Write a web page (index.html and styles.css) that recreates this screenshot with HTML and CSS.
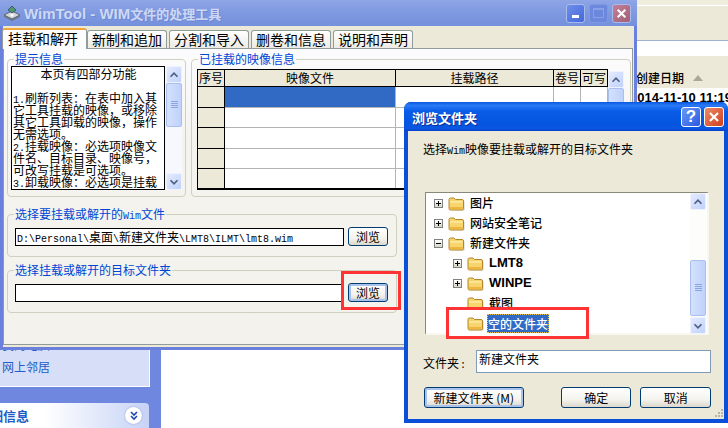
FILE: index.html
```html
<!DOCTYPE html>
<html lang="zh-CN">
<head>
<meta charset="utf-8">
<title>WimTool</title>
<link rel="stylesheet" href="styles.css">
</head>
<body>
<svg class="defs" width="0" height="0" aria-hidden="true">
  <symbol id="folder" viewBox="0 0 17 15">
    <path d="M2 14.5H16.5V5.5H15V14Z" fill="#b5b0a0" opacity=".6"/>
    <path d="M1 3.5Q1 2 2.5 2H6L7.5 3.5H14Q15.5 3.5 15.5 5V12.5Q15.5 14 14 14H2.5Q1 14 1 12.5Z" fill="#f7d56c" stroke="#b4862c"/>
    <path d="M2 5.5H14.5V6.5H2Z" fill="#fff2bf"/>
    <path d="M2 11H14.5V13H2Z" fill="#eeb53f"/>
  </symbol>
  <symbol id="chev-up" viewBox="0 0 16 16"><path d="M4 10L8 6L12 10" fill="none" stroke="#4d6185" stroke-width="2"/></symbol>
  <symbol id="chev-down" viewBox="0 0 16 16"><path d="M4 6L8 10L12 6" fill="none" stroke="#4d6185" stroke-width="2"/></symbol>
  <symbol id="close-x" viewBox="0 0 20 20"><path d="M5.5 5.5L14.5 14.5M14.5 5.5L5.5 14.5" stroke="#fff" stroke-width="2.4"/></symbol>
</svg>

<aside class="sidebar">
  <div class="task-panel">
    <div class="task-link">我的电脑</div>
    <div class="task-link">网上邻居</div>
  </div>
  <div class="task-head">
    <span class="task-title">详细信息</span>
    <span class="task-toggle">
      <svg width="12" height="12" viewBox="0 0 12 12"><path d="M3 2L6 5L9 2M3 6L6 9L9 6" fill="none" stroke="#1c48b0" stroke-width="1.6"/></svg>
    </span>
  </div>
</aside>

<section class="explorer">
  <div class="ex-toolbar"></div>
  <div class="ex-address"></div>
  <div class="ex-header"><span>创建日期</span><i class="sort-arrow"></i></div>
  <div class="ex-row">2014-11-10 11:19</div>
</section>

<main class="win-main">
  <header class="titlebar">
    <svg class="app-icon" width="18" height="17" viewBox="0 0 18 17">
      <path d="M1 10L9 6L17 10L9 14Z" fill="#d4d8de" stroke="#5a6472"/>
      <path d="M1 10V12L9 16L17 12V10L9 14Z" fill="#6d7684"/>
      <path d="M5 5L9 1L13 5L9 8Z" fill="#4f9a6a" stroke="#3c5a72"/>
      <circle cx="9" cy="10" r="1.6" fill="#fff"/>
    </svg>
    <h1 class="title-text"><span class="title-lat">WimTool - WIM</span>文件的处理工具</h1>
    <div class="caption-btns">
      <span class="cap cap-min"><i></i></span>
      <span class="cap cap-max"><i></i></span>
      <span class="cap cap-close"><svg width="19" height="19"><use href="#close-x"/></svg></span>
    </div>
  </header>

  <div class="client">
    <nav class="tabs">
      <span class="tab active">挂载和解开</span>
      <span class="tab">新制和追加</span>
      <span class="tab">分割和导入</span>
      <span class="tab">删卷和信息</span>
      <span class="tab">说明和声明</span>
    </nav>

    <div class="panel">
      <div class="top-groups">
        <fieldset class="group group-tips">
          <legend>提示信息</legend>
          <div class="tips-wrap">
            <div class="tips">
              <div class="center">本页有四部分功能</div>
              <div>&nbsp;</div>
              <div><span class="lat">1.</span>刷新列表：在表中加入其</div>
              <div>它工具挂载的映像，或移除</div>
              <div>其它工具卸载的映像，操作</div>
              <div>无需选项。</div>
              <div><span class="lat">2.</span>挂载映像：必选项映像文</div>
              <div>件名、目标目录、映像号，</div>
              <div>可改写挂载是可选项。</div>
              <div><span class="lat">3.</span>卸载映像：必选项是挂载</div>
            </div>
            <div class="sb sb-tips">
              <span class="sb-btn"><svg width="14" height="14"><use href="#chev-up"/></svg></span>
              <span class="sb-thumb thumb-tips"><i></i></span>
              <span class="sb-fill"></span>
              <span class="sb-btn"><svg width="14" height="14"><use href="#chev-down"/></svg></span>
            </div>
          </div>
        </fieldset>

        <fieldset class="group group-images">
          <legend>已挂载的映像信息</legend>
          <div class="images-wrap">
            <table class="grid">
              <colgroup><col class="c1"><col class="c2"><col class="c3"><col class="c4"><col class="c5"></colgroup>
              <thead><tr><th>序号</th><th>映像文件</th><th>挂载路径</th><th>卷号</th><th>可写</th></tr></thead>
              <tbody>
                <tr><th></th><td class="sel"></td><td></td><td></td><td></td></tr>
                <tr><th></th><td></td><td></td><td></td><td></td></tr>
                <tr><th></th><td></td><td></td><td></td><td></td></tr>
                <tr><th></th><td></td><td></td><td></td><td></td></tr>
                <tr><th></th><td></td><td></td><td></td><td></td></tr>
              </tbody>
            </table>
            <div class="sb sb-grid">
              <span class="sb-btn"><svg width="14" height="14"><use href="#chev-up"/></svg></span>
              <span class="sb-thumb thumb-grid"><i></i></span>
              <span class="sb-fill"></span>
            </div>
          </div>
        </fieldset>
      </div>

      <fieldset class="group group-file">
        <legend>选择要挂载或解开的<span class="lat">Wim</span>文件</legend>
        <div class="file-row">
          <div class="field"><span class="lat">D:\Personal\</span>桌面<span class="lat">\</span>新建文件夹<span class="lat">\LMT8\ILMT\lmt8.wim</span></div>
          <button class="btn btn-browse" type="button">浏览</button>
        </div>
      </fieldset>

      <fieldset class="group group-file group-target">
        <legend>选择挂载或解开的目标文件夹</legend>
        <div class="file-row">
          <div class="field"></div>
          <button class="btn btn-browse btn-default" type="button">浏览</button>
        </div>
      </fieldset>
    </div>
  </div>
  <div class="mark mark-browse"></div>
</main>

<section class="dialog">
  <header class="dlg-title">
    <h2 class="dlg-title-text">浏览文件夹</h2>
    <div class="dlg-caps">
      <span class="dcap dcap-help">?</span>
      <span class="dcap dcap-close"><svg width="20" height="20"><use href="#close-x"/></svg></span>
    </div>
  </header>
  <div class="dlg-body">
    <p class="dlg-prompt">选择<span class="lat">Wim</span>映像要挂载或解开的目标文件夹</p>
    <div class="tree">
      <div class="tree-rows">
        <div class="row"><i class="exp"></i><svg class="fld"><use href="#folder"/></svg><span class="lbl">图片</span></div>
        <div class="row"><i class="exp"></i><svg class="fld"><use href="#folder"/></svg><span class="lbl">网站安全笔记</span></div>
        <div class="row"><i class="exp minus"></i><svg class="fld"><use href="#folder"/></svg><span class="lbl">新建文件夹</span></div>
        <div class="row l2"><i class="exp"></i><svg class="fld"><use href="#folder"/></svg><span class="lbl latin">LMT8</span></div>
        <div class="row l2"><i class="exp"></i><svg class="fld"><use href="#folder"/></svg><span class="lbl latin">WINPE</span></div>
        <div class="row l2"><i class="exp none"></i><svg class="fld"><use href="#folder"/></svg><span class="lbl">截图</span></div>
        <div class="row l2 over"><i class="exp none"></i><svg class="fld"><use href="#folder"/></svg><span class="lbl selected">空的文件夹</span></div>
      </div>
      <div class="sb sb-tree">
        <span class="sb-btn"><svg width="14" height="14"><use href="#chev-up"/></svg></span>
        <span class="sb-fill tree-gap"></span>
        <span class="sb-thumb thumb-tree"><i></i></span>
        <span class="sb-btn"><svg width="14" height="14"><use href="#chev-down"/></svg></span>
      </div>
      <div class="mark mark-tree"></div>
    </div>
    <div class="folder-row">
      <label class="folder-label">文件夹<span class="lat">:</span></label>
      <div class="folder-input">新建文件夹</div>
    </div>
    <div class="dlg-btns">
      <button class="btn btn-new btn-default" type="button">新建文件夹 (M)</button>
      <span class="btn-spring"></span>
      <button class="btn btn-dlg" type="button">确定</button>
      <button class="btn btn-dlg" type="button">取消</button>
    </div>
    <svg class="grip" width="10" height="10" viewBox="0 0 10 10"><path d="M7 0h2v2H7zM4 3h2v2H4zM7 3h2v2H7zM1 6h2v2H1zM4 6h2v2H4zM7 6h2v2H7z" fill="#b8b5a4"/></svg>
  </div>
</section>
</body>
</html>
```

FILE: styles.css
```css
* { box-sizing: border-box; }
html, body { margin: 0; padding: 0; }
body {
  position: relative;
  width: 728px;
  height: 428px;
  overflow: hidden;
  background: #fff;
  font: 12px/14px "Noto Sans CJK SC", sans-serif;
  color: #000;
}
.defs { position: absolute; }
.lat { font-family: "Liberation Mono", "Noto Sans CJK SC", monospace; font-size: 10px; line-height: 0; }
h1, h2, p { margin: 0; }

/* desktop background windows */
.sidebar {
  position: absolute; left: 0; top: 0; width: 161px; height: 428px;
  background: #6f87de;
  display: flex; flex-direction: column; justify-content: flex-end;
}
.task-panel {
  width: 150px; height: 70px;
  background: #d6dff7;
  border-right: 1px solid #fff; border-bottom: 1px solid #fff;
  padding: 21px 0 0 2px;
  margin-bottom: 16px;
  display: flex; flex-direction: column; gap: 8px;
}
.task-link { color: #215dc6; }
.task-head {
  width: 149px; height: 25px;
  background: linear-gradient(90deg, #fff 0, #fff 30%, #c6d3f7 100%);
  border-top-right-radius: 4px;
  display: flex; align-items: center; justify-content: space-between;
  padding-right: 7px;
}
.task-title {
  width: 29px; display: flex; justify-content: flex-end; overflow: hidden; white-space: nowrap;
  font-weight: 700; font-size: 13px; color: #215dc6;
}
.task-toggle {
  width: 17px; height: 17px; border-radius: 50%; background: #fff;
  box-shadow: 0 0 2px #8a9ac8;
  display: flex; align-items: center; justify-content: center;
}
.explorer {
  position: absolute; left: 610px; top: 0; right: 0; height: 428px;
  background: #fff;
  display: flex; flex-direction: column;
}
.ex-toolbar { height: 41px; background: #ece9d8; box-shadow: inset 0 5px 0 #efedde, inset 0 6px 0 #fff; border-bottom: 1px solid #9fb1cf; }
.ex-address { height: 15px; background: #fff; }
.ex-header {
  height: 32px; background: #ece9d8; padding: 11px 0 0 26px;
  display: flex; align-items: center; gap: 9px; font-weight: 500;
}
.sort-arrow { width: 0; height: 0; border: 5px solid transparent; border-top: 0; border-bottom: 6px solid #aca899; }
.ex-row { padding: 2px 0 0 20px; font: 700 13px/16px "Liberation Sans", sans-serif; white-space: nowrap; }

/* main window */
.win-main {
  position: absolute; left: 0; top: 0; width: 637px; height: 350px;
  background: #6b80dd;
  padding: 0 3px 3px;
  display: flex; flex-direction: column;
}
.titlebar {
  height: 26px;
  margin: 0 -3px;
  background: linear-gradient(180deg, #8ea5e6 0, #7f99e0 50%, #7590dc 100%);
  display: flex; align-items: center;
  padding: 0 6px 0 3px;
}
.app-icon { flex: none; }
.title-text {
  font: 700 13px/16px "Noto Sans CJK SC", sans-serif;
  color: #cdd8f3; margin-left: 3px; padding-top: 1px;
  text-shadow: 1px 1px 0 #6f88d6;
  flex: 1;
}
.title-lat { font: 700 15px/16px "Liberation Sans", sans-serif; }
.caption-btns { display: flex; gap: 4px; }
.cap {
  width: 19px; height: 19px; border-radius: 3px;
  border: 1px solid #a9bbec;
  display: flex; align-items: center; justify-content: center; position: relative;
}
.cap-min { background: linear-gradient(135deg, #6e8fe8, #4468dc); }
.cap-min i { width: 7px; height: 3px; background: #fff; margin-top: 7px; }
.cap-max { background: #6b88dc; border-color: #7f9ae2; }
.cap-max i { width: 11px; height: 10px; border: 1px solid #8aa2e4; border-top-width: 2px; }
.cap-close { background: linear-gradient(135deg, #c28097, #a35f78); }

.client {
  flex: 1; background: #ece9d8;
  padding: 1px 1px 2px 0;
  display: flex; flex-direction: column;
}
.tabs { display: flex; align-items: flex-end; gap: 2px; height: 21px; margin-left: -1px; position: relative; z-index: 1; }
.tab {
  width: 80px; height: 18px;
  background: linear-gradient(180deg, #fff, #ecebe4);
  border: 1px solid #919b9c; border-bottom: 0;
  border-radius: 3px 3px 0 0;
  font-size: 14px; line-height: 17px; text-align: center;
}
.tab.active {
  width: 85px; height: 21px; margin-bottom: -1px; margin-right: -2px;
  background: #fcfcfe;
  border-top: 2px solid #f2a63a;
  line-height: 16px;
  padding-right: 3px;
}
.panel {
  flex: 1;
  border: 1px solid #919b9c;
  background: linear-gradient(180deg, #fcfcfe 0, #f4f3ee 30%, #f3f2ec 100%);
  padding: 3px 0 0 3px;
  display: flex; flex-direction: column;
}
.top-groups { display: flex; gap: 5px; }
.group {
  margin: 0; min-width: 0;
  border: 1px solid #d0d0bf; border-radius: 4px;
  padding: 0;
}
.group legend { padding: 0 1px; color: #0046d5; line-height: 14px; }
.group-tips { width: 179px; height: 145px; padding: 0 0 0 3px; }
.group-tips legend { margin-left: 3px; }
.tips-wrap { display: flex; gap: 1px; }
.tips {
  width: 154px; height: 124px;
  background: #fff; border: 1px solid #000;
  padding: 1px 0 0 1px;
  line-height: 12px; overflow: hidden; white-space: nowrap;
}
.center { text-align: center; }
.group-images { width: 440px; height: 145px; padding: 3px 0 0 5px; }
.group-images legend { margin-left: 1px; }
.images-wrap { display: flex; align-items: flex-start; }
.grid {
  width: 410px; height: 121px; table-layout: fixed;
  border-collapse: collapse;
  border: 1px solid #000; border-bottom-width: 2px;
}
.c1, .c4, .c5 { width: 27px; }
.c2 { width: 171px; }
.c3 { width: 158px; }
.grid th {
  background: #ece9d8; border: 1px solid #000; padding: 0;
  font-weight: 400; height: 17px; white-space: nowrap; overflow: hidden;
}
.grid td { background: #fff; border: 1px solid #b4b4b4; padding: 0; }
.grid td.sel { background: #316ac5; }

/* scrollbars */
.sb { width: 16px; display: flex; flex-direction: column; background: #f6f8fe; }
.sb-tips { height: 124px; }
.sb-grid { height: 117px; margin-top: 2px; }
.sb-btn {
  flex: none; height: 17px;
  background: linear-gradient(135deg, #e4ebfe, #c0d2fb);
  border: 1px solid #eef2fd; border-radius: 2px;
  display: flex; align-items: center; justify-content: center;
}
.sb-thumb {
  flex: none;
  background: linear-gradient(90deg, #d4e0fd, #c0d2fb);
  border: 1px solid #a9bff0; border-radius: 2px;
  display: flex; align-items: center; justify-content: center;
}
.sb-thumb i {
  width: 7px; height: 8px;
  background: repeating-linear-gradient(180deg, #8ba4e6 0, #8ba4e6 1px, transparent 1px, transparent 2px);
}
.thumb-tips { height: 44px; }
.thumb-grid { height: 44px; }
.thumb-tree { height: 56px; margin-bottom: 1px; }
.sb-fill { flex: 1; }

/* file rows */
.group-file { width: 390px; height: 50px; margin-top: 10px; margin-left: 0; padding: 0 0 0 7px; }
.group-file legend { margin-left: -1px; }
.group-target { margin-top: 6px; }
.file-row { display: flex; align-items: flex-start; gap: 4px; margin-top: 6px; }
.field {
  width: 329px; height: 18px; margin-top: 1px;
  background: #fff; border: 1px solid #000;
  padding-left: 1px; line-height: 16px; white-space: nowrap; overflow: hidden;
}
.btn {
  font: 12px/14px "Noto Sans CJK SC", sans-serif;
  color: #000; padding: 0;
  border: 1px solid #003c74; border-radius: 3px;
  background: linear-gradient(180deg, #fff 0, #f4f3ee 60%, #dcd8cc 100%);
}
.btn-browse { width: 40px; height: 19px; }
.btn-default { box-shadow: inset 0 0 0 2px #a9c2ec; }

.mark { position: absolute; border: 3px solid #ff3333; }
.mark-browse { left: 341px; top: 271px; width: 60px; height: 39px; }

/* dialog */
.dialog {
  position: absolute; left: 404px; top: 102px; width: 324px; height: 321px;
  background: #0a4fd8;
  border-radius: 7px 7px 0 0;
  padding: 0 4px 4px;
  display: flex; flex-direction: column;
}
.dlg-title {
  height: 29px; margin: 0 -4px;
  border-radius: 7px 7px 0 0;
  background: linear-gradient(180deg, #0a56e0 0, #2a7af5 12%, #0a5de8 30%, #0555e0 75%, #0a56e0 92%, #0640c8 100%);
  display: flex; align-items: center; justify-content: space-between;
  padding: 0 4px 0 8px;
}
.dlg-title-text { font: 700 13px/16px "Noto Sans CJK SC", sans-serif; color: #fff; text-shadow: 1px 1px 0 #0a2f9a; padding-top: 3px; }
.dlg-caps { display: flex; gap: 3px; }
.dcap {
  width: 20px; height: 20px; border: 1px solid #fff; border-radius: 3px;
  display: flex; align-items: center; justify-content: center;
}
.dcap-help {
  background: linear-gradient(135deg, #6a9af8, #2a58e0);
  color: #fff; font: 700 17px/18px "Liberation Sans", sans-serif;
}
.dcap-close { background: linear-gradient(135deg, #ec8a68, #d2401c); }
.dlg-body {
  flex: 1; position: relative;
  background: #ece9d8;
  display: flex; flex-direction: column;
  padding: 11px 13px 0 15px;
}
.dlg-prompt { line-height: 14px; }
.tree {
  position: relative;
  width: 284px; height: 143px;
  margin: 36px 0 0 2px;
  background: #fff;
  border: 2px solid; border-color: #8a8878 #f7f6ef #f7f6ef #8a8878;
  border-top-width: 1px; border-left-width: 1px;
  display: flex;
}
.tree-rows { flex: 1; padding-left: 8px; }
.row { height: 20px; display: flex; align-items: center; font-weight: 500; }
.row.l2 { padding-left: 19px; }
.row.over { position: relative; z-index: 2; }
.exp {
  flex: none; width: 9px; height: 9px;
  border: 1px solid #808080;
  background:
    linear-gradient(#000, #000) center / 5px 1px no-repeat,
    linear-gradient(#000, #000) center / 1px 5px no-repeat,
    linear-gradient(180deg, #fff, #d8d6c6);
}
.exp.minus {
  background:
    linear-gradient(#000, #000) center / 5px 1px no-repeat,
    linear-gradient(180deg, #fff, #d8d6c6);
}
.exp.none { visibility: hidden; }
.fld { flex: none; width: 17px; height: 15px; margin-left: 5px; }
.lbl { margin-left: 4px; white-space: nowrap; padding: 0 1px; }
.lbl.latin { font: 700 13px/14px "Liberation Sans", sans-serif; }
.lbl.selected {
  background: #316ac5; color: #fff; font-weight: 500;
  outline: 1px dotted #e8c04a; outline-offset: -1px;
  line-height: 19px; height: 19px; margin-left: 3px;
}
.sb-tree { flex: none; height: 141px; background: #fdfdf9; margin-right: 1px; }
.tree-gap { flex: 1; }
.mark-tree { left: 20px; top: 114px; width: 143px; height: 32px; background: #fff; z-index: 1; }
.folder-row { display: flex; align-items: center; margin: 15px 0 0 0; height: 23px; }
.folder-label { width: 53px; padding-top: 2px; }
.folder-label .lat { margin-left: 1px; }
.folder-input {
  width: 235px; height: 23px;
  background: #fff; border: 1px solid #7f9db9;
  padding: 1px 0 0 2px;
}
.dlg-btns { display: flex; gap: 9px; margin: 14px 0 0 1px; }
.btn-new { width: 103px; height: 21px; }
.btn-spring { width: 20px; }
.btn-dlg { width: 73px; height: 21px; }
.grip { position: absolute; right: 0; bottom: 0; }
```
